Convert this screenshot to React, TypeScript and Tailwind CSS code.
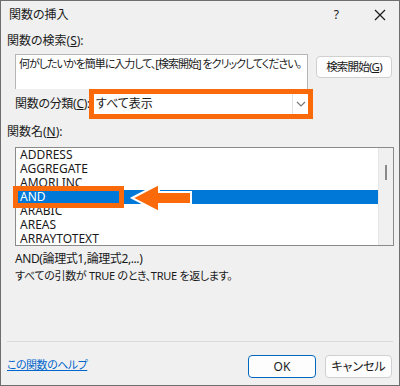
import React from 'react';

const items = ['ADDRESS', 'AGGREGATE', 'AMORLINC', 'AND', 'ARABIC', 'AREAS', 'ARRAYTOTEXT'];

function Chevron() {
  return (
    <svg width="10" height="6" viewBox="0 0 10 6" className="block">
      <path d="M1 1 L5 5 L9 1" fill="none" stroke="#7a7a7a" strokeWidth="1.2" />
    </svg>
  );
}

function Arrow() {
  // orange arrow pointing at the selected item
  return (
    <svg width="64" height="30" viewBox="0 0 64 30" className="absolute left-[114px] top-[35px]">
      <polygon
        points="2,15 29,1 29,9 61,9 61,21 29,21 29,29"
        fill="#fa6a0a"
        stroke="#ffffff"
        strokeWidth="2"
        strokeLinejoin="miter"
      />
    </svg>
  );
}

export default function App() {
  return (
    <div className="w-[400px] h-[386px] flex flex-col border border-[#6e6e6e] bg-[#f0f0f0] text-[12px] text-[#1a1a1a] font-['Noto_Sans','Noto_Sans_CJK_JP',sans-serif] [font-feature-settings:'palt'] overflow-hidden whitespace-nowrap">
      {/* title bar */}
      <div className="h-[27px] flex items-center pl-[8px] pr-[13px]">
        <span className="leading-[14px]">関数の挿入</span>
        <span className="ml-auto mr-[35px] leading-[14px]">?</span>
        <svg width="12" height="12" viewBox="0 0 12 12">
          <path d="M1 1 L11 11 M11 1 L1 11" stroke="#1a1a1a" strokeWidth="1.2" />
        </svg>
      </div>

      <div className="mt-[6px] pl-[6px] h-[14px] leading-[14px]">
        関数の検索(<span className="underline">S</span>):
      </div>

      {/* search row */}
      <div className="mt-[6px] flex pl-[14px]">
        <div className="w-[293px] h-[35px] bg-white border border-[#b5b5b5] border-b-0 px-[3px] pt-[2px] leading-[14px] text-[11px] tracking-[-1px] overflow-hidden">
          何がしたいかを簡単に入力して、[検索開始] をクリックしてください。
        </div>
        <button className="ml-[8px] mt-[2px] w-[76px] h-[22px] bg-[#fdfdfd] border border-[#d0d0d0] rounded-[4px] leading-[14px] text-[11.5px] tracking-[-0.8px] px-0">
          検索開始(<span className="underline">G</span>)
        </button>
      </div>

      {/* category row */}
      <div className="flex items-center pl-[14px]">
        <span className="w-[74px] leading-[14px] tracking-[-0.3px]">
          関数の分類(<span className="underline">C</span>):
        </span>
        <div className="w-[224px] h-[30px] border-[5px] border-[#fa6a0a] bg-white flex items-center">
          <span className="pl-[2px] leading-[14px]">すべて表示</span>
          <div className="ml-auto w-[16px] h-full border-l border-[#e3e3e3] flex items-center justify-center">
            <Chevron />
          </div>
        </div>
      </div>

      <div className="mt-[6px] pl-[6px] h-[14px] leading-[14px]">
        関数名(<span className="underline">N</span>):
      </div>

      {/* function list */}
      <div className="relative mt-[8px] ml-[14px] w-[379px] h-[99px] border border-[#8a8a8a] bg-white flex">
        <div className="flex-1 overflow-hidden">
          {items.map((it) => (
            <div
              key={it}
              className={
                it === 'AND'
                  ? 'h-[14px] leading-[14px] pl-[3px] ml-[1px] bg-[#0078d7] text-white'
                  : 'h-[14px] leading-[14px] pl-[4px]'
              }
            >
              {it}
            </div>
          ))}
        </div>
        <div className="w-[15px] h-full bg-[#f0f0f0] border-l border-[#e6e6e6] flex justify-center">
          <div className="mt-[17px] w-[2px] h-[15px] bg-[#8a8a8a]" />
        </div>
        <div className="absolute left-[-3px] top-[38px] w-[111px] h-[22px] border-[5px] border-[#fa6a0a]" />
        <Arrow />
      </div>

      {/* description */}
      <div className="mt-[6px] pl-[14px] h-[14px] leading-[14px] tracking-[-0.4px]">AND(論理式1,論理式2,...)</div>
      <div className="mt-[3px] pl-[14px] h-[14px] leading-[14px] text-[11px] tracking-[-0.3px]">
        すべての引数が TRUE のとき、TRUE を返します。
      </div>

      <div className="mt-[58px] mx-[6px] border-t border-[#dadada]" />

      {/* footer */}
      <div className="mt-[13px] flex items-center pl-[6px] pr-[7px]">
        <a className="text-[#0066cc] underline leading-[14px] -mt-[4px] text-[11px] tracking-[-0.5px]">この関数のヘルプ</a>
        <button className="ml-auto w-[68px] h-[23px] bg-[#fdfdfd] border border-[#0067c0] rounded-[4px] leading-[14px]">
          OK
        </button>
        <button className="ml-[9px] w-[67px] h-[23px] bg-[#fdfdfd] border border-[#d0d0d0] rounded-[4px] leading-[14px]">
          キャンセル
        </button>
      </div>
    </div>
  );
}
